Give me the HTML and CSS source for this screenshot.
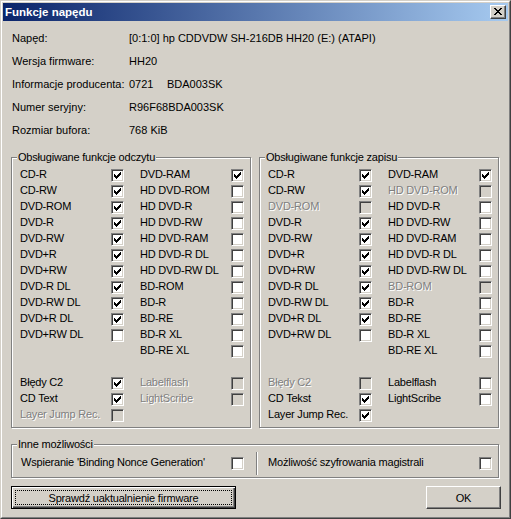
FILE: index.html
```html
<!DOCTYPE html>
<html lang="pl">
<head>
<meta charset="utf-8">
<title>Funkcje napędu</title>
<link rel="stylesheet" href="styles.css">
</head>
<body>
<svg class="defs" aria-hidden="true">
  <symbol id="chk" viewBox="0 0 7 7"><path d="M6 0h1v1h-1z M5 1h2v1h-2z M0 2h1v1h-1z M4 2h3v1h-3z M0 3h2v1h-2z M3 3h3v1h-3z M0 4h5v1h-5z M1 5h3v1h-3z M2 6h1v1h-1z"/></symbol>
  <symbol id="cls" viewBox="0 0 8 7"><path d="M0 0h2v1h-2z M6 0h2v1h-2z M1 1h2v1h-2z M5 1h2v1h-2z M2 2h4v1h-4z M3 3h2v1h-2z M2 4h4v1h-4z M1 5h2v1h-2z M5 5h2v1h-2z M0 6h2v1h-2z M6 6h2v1h-2z"/></symbol>
</svg>
<div class="window">
  <div class="frame">
    <div class="titlebar">
      <span class="title">Funkcje napędu</span>
      <span class="close"><svg class="xicon"><use href="#cls"/></svg></span>
    </div>
    <div class="body">
      <div class="info">
        <div class="irow"><span class="ilabel">Napęd:</span><span>[0:1:0] hp CDDVDW SH-216DB HH20 (E:) (ATAPI)</span></div>
        <div class="irow"><span class="ilabel">Wersja firmware:</span><span>HH20</span></div>
        <div class="irow"><span class="ilabel">Informacje producenta:</span><span class="code">0721</span><span>BDA003SK</span></div>
        <div class="irow"><span class="ilabel">Numer seryjny:</span><span>R96F68BDA003SK</span></div>
        <div class="irow"><span class="ilabel">Rozmiar bufora:</span><span>768 KiB</span></div>
      </div>

      <div class="groups">
        <fieldset class="group">
          <legend>Obsługiwane funkcje odczytu</legend>
          <div class="grid">
            <div class="item"><span class="lbl">CD-R</span><span class="cb"><svg><use href="#chk"/></svg></span></div>
            <div class="item"><span class="lbl">DVD-RAM</span><span class="cb"><svg><use href="#chk"/></svg></span></div>
            <div class="item"><span class="lbl">CD-RW</span><span class="cb"><svg><use href="#chk"/></svg></span></div>
            <div class="item"><span class="lbl">HD DVD-ROM</span><span class="cb"></span></div>
            <div class="item"><span class="lbl">DVD-ROM</span><span class="cb"><svg><use href="#chk"/></svg></span></div>
            <div class="item"><span class="lbl">HD DVD-R</span><span class="cb"></span></div>
            <div class="item"><span class="lbl">DVD-R</span><span class="cb"><svg><use href="#chk"/></svg></span></div>
            <div class="item"><span class="lbl">HD DVD-RW</span><span class="cb"></span></div>
            <div class="item"><span class="lbl">DVD-RW</span><span class="cb"><svg><use href="#chk"/></svg></span></div>
            <div class="item"><span class="lbl">HD DVD-RAM</span><span class="cb"></span></div>
            <div class="item"><span class="lbl">DVD+R</span><span class="cb"><svg><use href="#chk"/></svg></span></div>
            <div class="item"><span class="lbl">HD DVD-R DL</span><span class="cb"></span></div>
            <div class="item"><span class="lbl">DVD+RW</span><span class="cb"><svg><use href="#chk"/></svg></span></div>
            <div class="item"><span class="lbl">HD DVD-RW DL</span><span class="cb"></span></div>
            <div class="item"><span class="lbl">DVD-R DL</span><span class="cb"><svg><use href="#chk"/></svg></span></div>
            <div class="item"><span class="lbl">BD-ROM</span><span class="cb"></span></div>
            <div class="item"><span class="lbl">DVD-RW DL</span><span class="cb"><svg><use href="#chk"/></svg></span></div>
            <div class="item"><span class="lbl">BD-R</span><span class="cb"></span></div>
            <div class="item"><span class="lbl">DVD+R DL</span><span class="cb"><svg><use href="#chk"/></svg></span></div>
            <div class="item"><span class="lbl">BD-RE</span><span class="cb"></span></div>
            <div class="item"><span class="lbl">DVD+RW DL</span><span class="cb"></span></div>
            <div class="item"><span class="lbl">BD-R XL</span><span class="cb"></span></div>
            <div class="item"></div>
            <div class="item"><span class="lbl">BD-RE XL</span><span class="cb"></span></div>
            <div class="item"></div>
            <div class="item"></div>
            <div class="item"><span class="lbl">Błędy C2</span><span class="cb"><svg><use href="#chk"/></svg></span></div>
            <div class="item dis"><span class="lbl">Labelflash</span><span class="cb"></span></div>
            <div class="item"><span class="lbl">CD Text</span><span class="cb"><svg><use href="#chk"/></svg></span></div>
            <div class="item dis"><span class="lbl">LightScribe</span><span class="cb"></span></div>
            <div class="item dis"><span class="lbl">Layer Jump Rec.</span><span class="cb"></span></div>
            <div class="item"></div>
          </div>
        </fieldset>

        <fieldset class="group">
          <legend>Obsługiwane funkcje zapisu</legend>
          <div class="grid">
            <div class="item"><span class="lbl">CD-R</span><span class="cb"><svg><use href="#chk"/></svg></span></div>
            <div class="item"><span class="lbl">DVD-RAM</span><span class="cb"><svg><use href="#chk"/></svg></span></div>
            <div class="item"><span class="lbl">CD-RW</span><span class="cb"><svg><use href="#chk"/></svg></span></div>
            <div class="item dis"><span class="lbl">HD DVD-ROM</span><span class="cb"></span></div>
            <div class="item dis"><span class="lbl">DVD-ROM</span><span class="cb"></span></div>
            <div class="item"><span class="lbl">HD DVD-R</span><span class="cb"></span></div>
            <div class="item"><span class="lbl">DVD-R</span><span class="cb"><svg><use href="#chk"/></svg></span></div>
            <div class="item"><span class="lbl">HD DVD-RW</span><span class="cb"></span></div>
            <div class="item"><span class="lbl">DVD-RW</span><span class="cb"><svg><use href="#chk"/></svg></span></div>
            <div class="item"><span class="lbl">HD DVD-RAM</span><span class="cb"></span></div>
            <div class="item"><span class="lbl">DVD+R</span><span class="cb"><svg><use href="#chk"/></svg></span></div>
            <div class="item"><span class="lbl">HD DVD-R DL</span><span class="cb"></span></div>
            <div class="item"><span class="lbl">DVD+RW</span><span class="cb"><svg><use href="#chk"/></svg></span></div>
            <div class="item"><span class="lbl">HD DVD-RW DL</span><span class="cb"></span></div>
            <div class="item"><span class="lbl">DVD-R DL</span><span class="cb"><svg><use href="#chk"/></svg></span></div>
            <div class="item dis"><span class="lbl">BD-ROM</span><span class="cb"></span></div>
            <div class="item"><span class="lbl">DVD-RW DL</span><span class="cb"><svg><use href="#chk"/></svg></span></div>
            <div class="item"><span class="lbl">BD-R</span><span class="cb"></span></div>
            <div class="item"><span class="lbl">DVD+R DL</span><span class="cb"><svg><use href="#chk"/></svg></span></div>
            <div class="item"><span class="lbl">BD-RE</span><span class="cb"></span></div>
            <div class="item"><span class="lbl">DVD+RW DL</span><span class="cb"></span></div>
            <div class="item"><span class="lbl">BD-R XL</span><span class="cb"></span></div>
            <div class="item"></div>
            <div class="item"><span class="lbl">BD-RE XL</span><span class="cb"></span></div>
            <div class="item"></div>
            <div class="item"></div>
            <div class="item dis"><span class="lbl">Błędy C2</span><span class="cb"></span></div>
            <div class="item"><span class="lbl">Labelflash</span><span class="cb"></span></div>
            <div class="item"><span class="lbl">CD Tekst</span><span class="cb"><svg><use href="#chk"/></svg></span></div>
            <div class="item"><span class="lbl">LightScribe</span><span class="cb"></span></div>
            <div class="item"><span class="lbl">Layer Jump Rec.</span><span class="cb"><svg><use href="#chk"/></svg></span></div>
            <div class="item"></div>
          </div>
        </fieldset>
      </div>

      <fieldset class="group other">
        <legend>Inne możliwości</legend>
        <div class="orow">
          <span class="olbl olbl1">Wspieranie 'Binding Nonce Generation'</span>
          <span class="cb"></span>
          <span class="vsep"></span>
          <span class="olbl olbl2">Możliwość szyfrowania magistrali</span>
          <span class="cb"></span>
        </div>
      </fieldset>

      <div class="buttons">
        <button class="btn default wide">Sprawdź uaktualnienie firmware</button>
        <button class="btn ok">OK</button>
      </div>
    </div>
  </div>
</div>
</body>
</html>
```
FILE: styles.css
```css
html, body {
  margin: 0;
  padding: 0;
  background: #D4D0C8;
}
body {
  font-family: "Liberation Sans", Arial, sans-serif;
  font-size: 11px;
  letter-spacing: -0.2px;
  color: #000;
}
.defs {
  position: absolute;
  width: 0;
  height: 0;
  overflow: hidden;
}
.window {
  width: 511px;
  height: 519px;
  box-sizing: border-box;
  border: 1px solid;
  border-color: #D4D0C8 #404040 #404040 #D4D0C8;
}
.frame {
  height: 100%;
  box-sizing: border-box;
  border: 1px solid;
  border-color: #FFFFFF #808080 #808080 #FFFFFF;
  padding: 1px;
  display: flex;
  flex-direction: column;
}
.titlebar {
  height: 18px;
  flex: none;
  background: linear-gradient(to right, #0A246A, #A6CAF0);
  display: flex;
  align-items: center;
  justify-content: space-between;
  padding: 0 2px 0 2px;
}
.title {
  color: #FFFFFF;
  font-weight: bold;
  font-size: 11.5px;
  letter-spacing: 0;
  line-height: 14px;
  white-space: nowrap;
}
.close {
  width: 16px;
  height: 14px;
  box-sizing: border-box;
  background: #D4D0C8;
  border: 1px solid;
  border-color: #FFFFFF #404040 #404040 #FFFFFF;
  box-shadow: inset -1px -1px 0 #808080;
  display: flex;
  align-items: center;
  justify-content: center;
  padding-bottom: 1px;
}
.xicon {
  width: 8px;
  height: 7px;
  display: block;
  fill: #000;
  shape-rendering: crispEdges;
}
.body {
  flex: 1;
  padding: 6px 7px 7px 8px;
  display: flex;
  flex-direction: column;
}
.info {
  margin-left: 1px;
  letter-spacing: 0;
}
.irow {
  height: 23px;
  line-height: 23px;
  display: flex;
  white-space: nowrap;
}
.ilabel {
  width: 117px;
  flex: none;
}
.code {
  width: 38px;
  flex: none;
}
.groups {
  margin-top: 9px;
  display: grid;
  grid-template-columns: 240px 240px;
  column-gap: 8px;
}
.group {
  margin: 0;
  padding: 0;
  min-width: 0;
  border: 1px solid #808080;
  box-shadow: inset 1px 1px 0 #FFFFFF, 1px 1px 0 #FFFFFF;
}
.group legend {
  margin-left: 5px;
  padding: 0 1px;
  line-height: 13px;
  background: #D4D0C8;
  white-space: nowrap;
}
.grid {
  display: grid;
  grid-template-columns: 104px 104px;
  column-gap: 16px;
  grid-auto-rows: 16px;
  padding: 4px 0 3px 8px;
}
.item {
  display: flex;
  align-items: flex-start;
}
.lbl {
  width: 91px;
  flex: none;
  line-height: 12px;
  white-space: nowrap;
}
.cb {
  width: 13px;
  height: 13px;
  flex: none;
  box-sizing: border-box;
  margin-top: 1px;
  padding: 2px;
  background: #FFFFFF;
  border: 1px solid;
  border-color: #808080 #FFFFFF #FFFFFF #808080;
  box-shadow: inset 1px 1px 0 #404040, inset -1px -1px 0 #D4D0C8;
}
.cb svg {
  display: block;
  width: 7px;
  height: 7px;
  fill: #000;
  shape-rendering: crispEdges;
}
.dis .lbl {
  color: #808080;
  text-shadow: 1px 1px 0 #FFFFFF;
}
.dis .cb {
  background: #D4D0C8;
}
.other {
  margin-top: 10px;
  width: 488px;
  box-sizing: border-box;
}
.orow {
  display: flex;
  align-items: flex-start;
  height: 24px;
  padding: 1px 0 1px 9px;
}
.olbl {
  flex: none;
  line-height: 12px;
  margin-top: 4px;
  white-space: nowrap;
}
.olbl1 {
  width: 210px;
}
.olbl2 {
  width: 211px;
  margin-left: 10px;
}
.orow .cb {
  margin-top: 5px;
}
.vsep {
  flex: none;
  width: 0;
  height: 23px;
  margin-left: 12px;
  border-left: 1px solid #808080;
  border-right: 1px solid #FFFFFF;
}
.buttons {
  margin-top: 8px;
  display: flex;
  justify-content: space-between;
}
.btn {
  height: 23px;
  box-sizing: border-box;
  margin: 0;
  padding: 0;
  font-family: inherit;
  font-size: 11px;
  letter-spacing: -0.2px;
  color: #000;
  background: #D4D0C8;
  border: 1px solid;
  border-color: #FFFFFF #404040 #404040 #FFFFFF;
  box-shadow: inset -1px -1px 0 #808080, inset 1px 1px 0 #D4D0C8;
  position: relative;
}
.btn.default {
  border: 1px solid #000;
  box-shadow: inset 1px 1px 0 #FFFFFF, inset -1px -1px 0 #404040, inset -2px -2px 0 #808080;
}
.btn.default::after {
  content: "";
  position: absolute;
  top: 3px;
  left: 3px;
  right: 3px;
  bottom: 3px;
  border: 1px dotted #000;
}
.wide {
  width: 225px;
}
.ok {
  width: 75px;
}
```
